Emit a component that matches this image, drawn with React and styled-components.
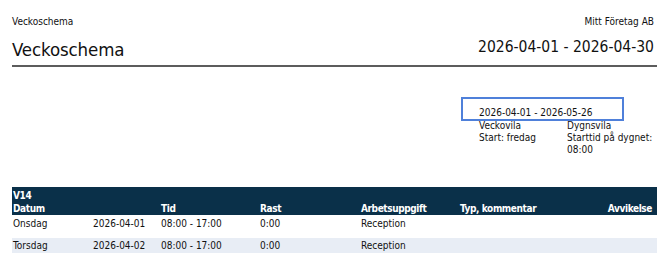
import styled, { createGlobalStyle } from "styled-components";

const GlobalStyle = createGlobalStyle`
  html, body {
    margin: 0;
    padding: 0;
    background: #ffffff;
  }
  body {
    font-family: "DejaVu Sans Condensed", "DejaVu Sans", sans-serif;
    font-stretch: condensed;
    font-size: 10px;
    color: #111111;
  }
`;

const Page = styled.div`
  width: 670px;
  height: 259px;
  padding: 16px 13px 0 12px;
  box-sizing: border-box;
  overflow: hidden;
`;

const Header = styled.header`
  display: flex;
  justify-content: space-between;
  align-items: flex-start;
  padding-bottom: 4px;
  border-bottom: 2px solid #5c5c5c;
`;

const HeaderSide = styled.div`
  display: flex;
  flex-direction: column;
  align-items: ${(p) => (p.$right ? "flex-end" : "flex-start")};
  padding-right: ${(p) => (p.$right ? 3 : 0)}px;
`;

const SmallLabel = styled.div`
  font-size: 10px;
  line-height: 12px;
`;

const Heading = styled.div`
  font-size: ${(p) => p.$size}px;
  line-height: ${(p) => p.$lh}px;
  letter-spacing: ${(p) => p.$ls || 0}px;
  margin-top: 11px;
  white-space: nowrap;
`;

const RestBlock = styled.section`
  margin: 30px 0 0 449px;
  width: 200px;
  line-height: 12px;
`;

const PeriodBox = styled.div`
  width: 163px;
  height: 24px;
  box-sizing: border-box;
  border: 2px solid #4f80da;
  padding: 8px 0 0 16px;
`;

const RestColumns = styled.div`
  display: grid;
  grid-template-columns: 88px 1fr;
  padding-left: 18px;
  margin-top: -1px;
  white-space: nowrap;
`;

const Table = styled.div`
  margin-top: 31px;
`;

const HeadBlock = styled.div`
  background: #0a3049;
  color: #ffffff;
  font-weight: bold;
  letter-spacing: -0.4px;
  padding-top: 2px;
`;

const Row = styled.div`
  display: grid;
  grid-template-columns: 80px 68px 99px 101px 99px 1fr 100px;
  padding-left: 1px;
  height: ${(p) => p.$h}px;
  line-height: ${(p) => p.$lh}px;
  background: ${(p) => (p.$alt ? "#e8edf5" : "transparent")};
  margin-top: ${(p) => p.$gap || 0}px;
`;

const Cell = styled.div`
  padding-right: ${(p) => (p.$right ? 5 : 0)}px;
  text-align: ${(p) => (p.$right ? "right" : "left")};
  white-space: nowrap;
`;

const days = [
  { day: "Onsdag", date: "2026-04-01", time: "08:00 - 17:00", rest: "0:00", task: "Reception" },
  { day: "Torsdag", date: "2026-04-02", time: "08:00 - 17:00", rest: "0:00", task: "Reception" },
];

export default function App() {
  return (
    <>
      <GlobalStyle />
      <Page>
        <Header>
          <HeaderSide>
            <SmallLabel>Veckoschema</SmallLabel>
            <Heading $size={18.5} $lh={22} $ls={-0.1}>
              Veckoschema
            </Heading>
          </HeaderSide>
          <HeaderSide $right>
            <SmallLabel>Mitt Företag AB</SmallLabel>
            <Heading $size={15.5} $lh={17}>
              2026-04-01 - 2026-04-30
            </Heading>
          </HeaderSide>
        </Header>

        <RestBlock>
          <PeriodBox>2026-04-01 - 2026-05-26</PeriodBox>
          <RestColumns>
            <div>
              Veckovila
              <br />
              Start: fredag
            </div>
            <div>
              Dygnsvila
              <br />
              Starttid på dygnet:
              <br />
              08:00
            </div>
          </RestColumns>
        </RestBlock>

        <Table>
          <HeadBlock>
            <Row $h={13} $lh={13}>
              <Cell>V14</Cell>
            </Row>
            <Row $h={13} $lh={13}>
              <Cell>Datum</Cell>
              <Cell />
              <Cell>Tid</Cell>
              <Cell>Rast</Cell>
              <Cell>Arbetsuppgift</Cell>
              <Cell>Typ, kommentar</Cell>
              <Cell $right>Avvikelse</Cell>
            </Row>
          </HeadBlock>
          {days.map((d, i) => (
            <Row
              key={d.date}
              $alt={i % 2 === 1}
              $h={15}
              $lh={i === 0 ? 17 : 16}
              $gap={i > 0 ? 8 : 0}
            >
              <Cell>{d.day}</Cell>
              <Cell>{d.date}</Cell>
              <Cell>{d.time}</Cell>
              <Cell>{d.rest}</Cell>
              <Cell>{d.task}</Cell>
              <Cell />
              <Cell $right />
            </Row>
          ))}
        </Table>
      </Page>
    </>
  );
}
